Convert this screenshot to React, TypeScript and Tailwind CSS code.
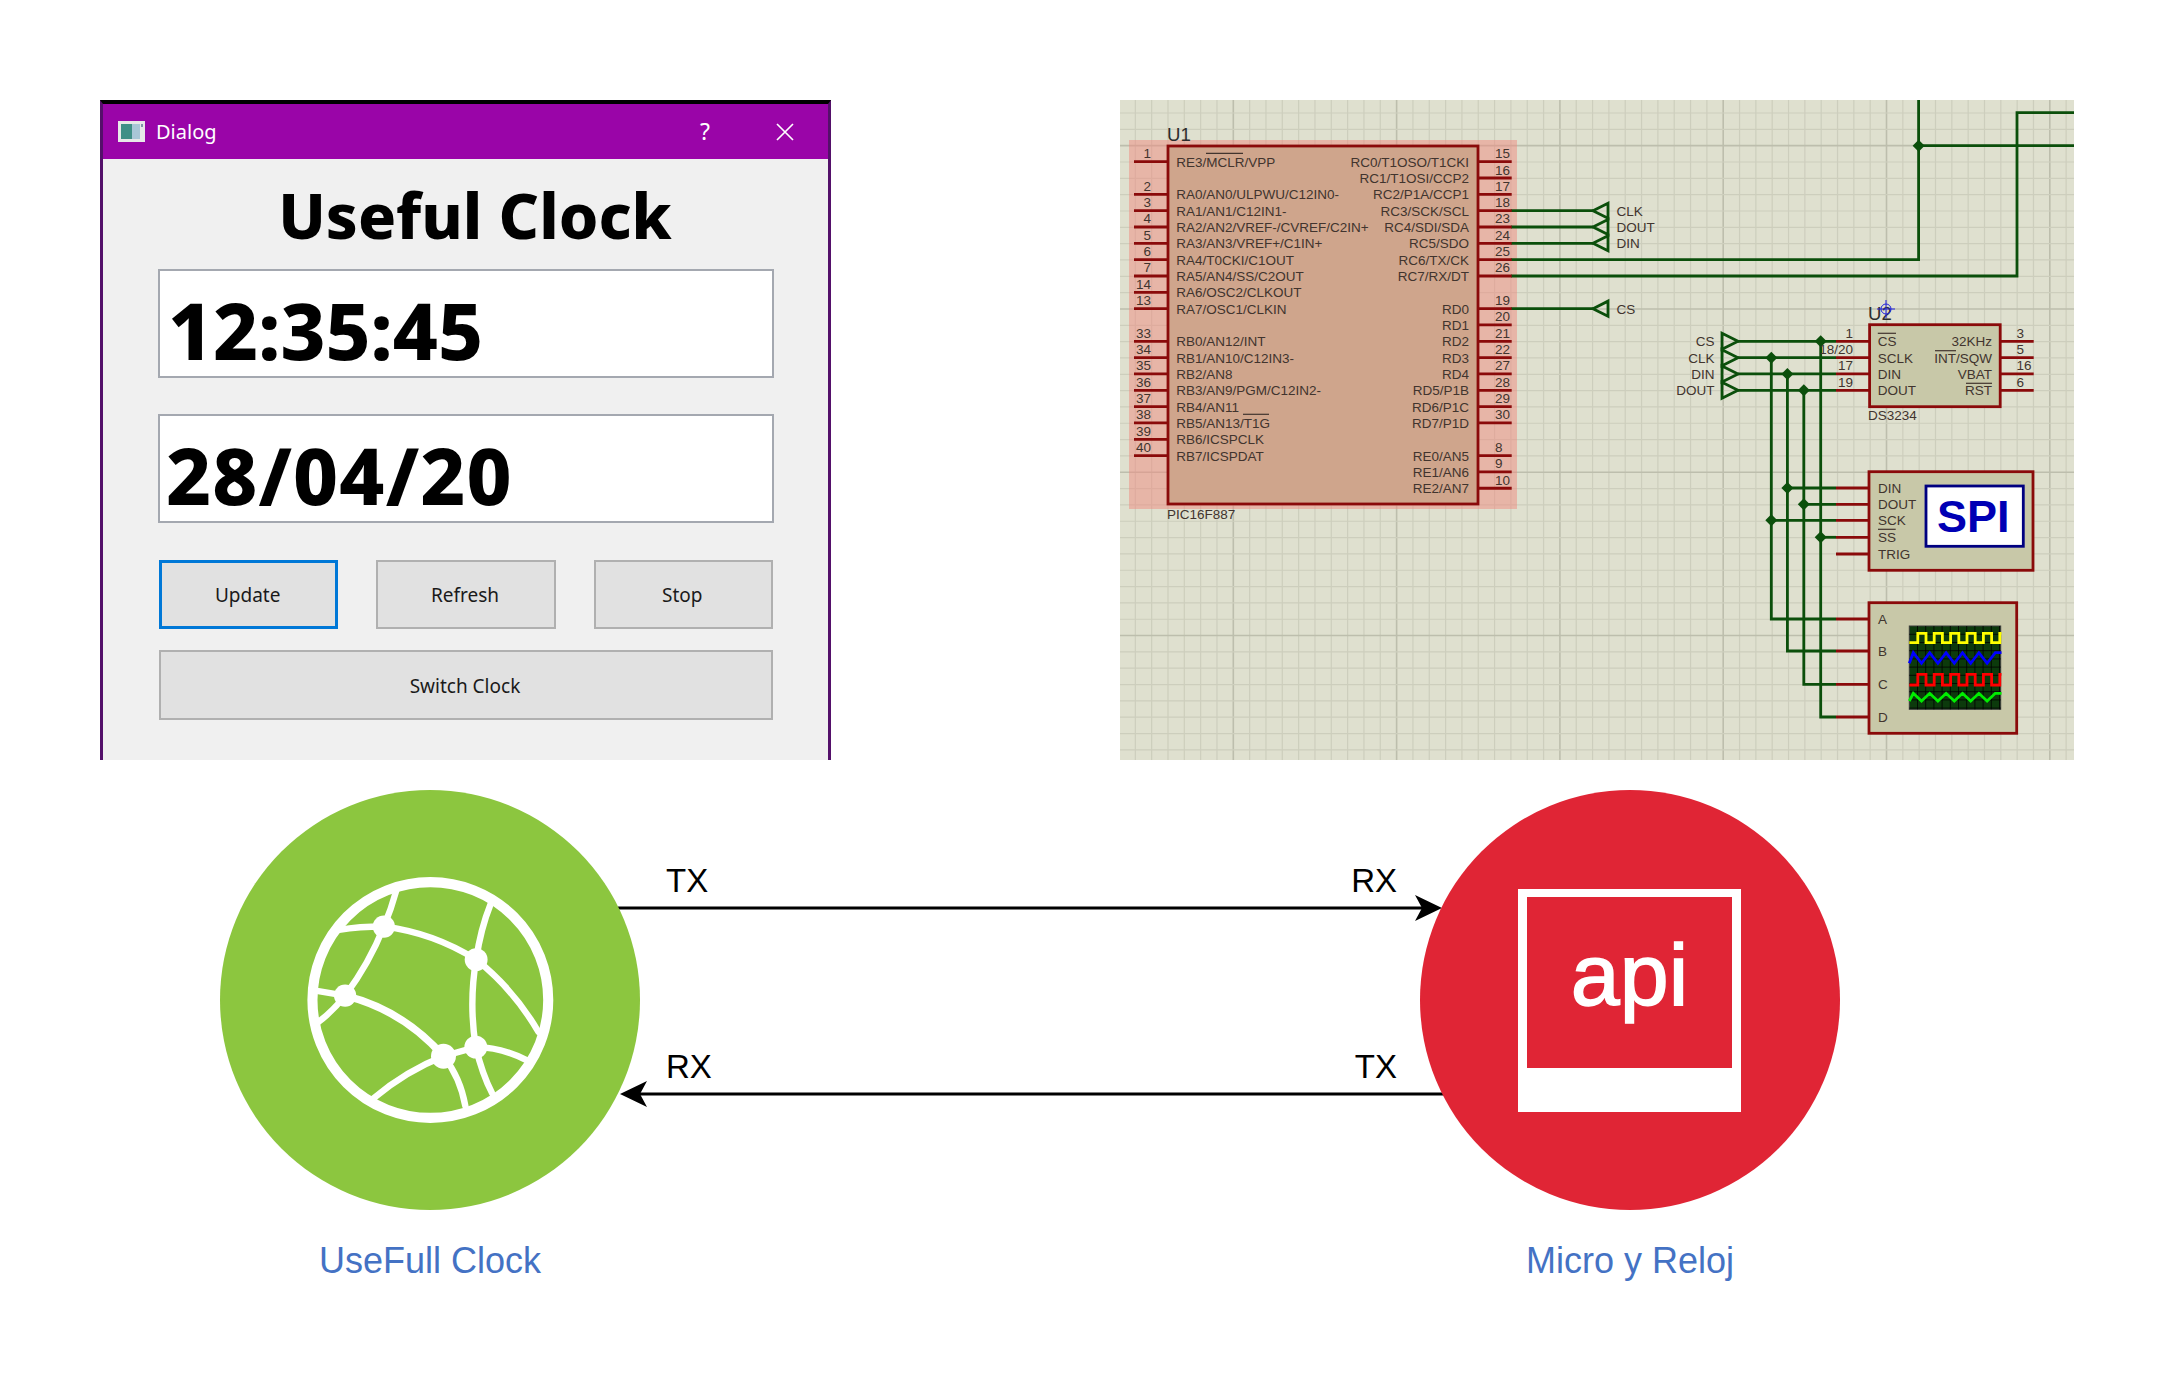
import { ReactNode } from "react";

// Schematic rows sit on a 16.33px pitch, everything below is in page pixels.
const rowY = (r: number) => 161.67 + 16.33 * r;
const WIRE = "#0b4f0b";
const PIN = "#8a0a0a";
const INK = "#41342e";

const leftPins: [number, string, string][] = [
  [0, "1", "RE3/MCLR/VPP"],
  [2, "2", "RA0/AN0/ULPWU/C12IN0-"],
  [3, "3", "RA1/AN1/C12IN1-"],
  [4, "4", "RA2/AN2/VREF-/CVREF/C2IN+"],
  [5, "5", "RA3/AN3/VREF+/C1IN+"],
  [6, "6", "RA4/T0CKI/C1OUT"],
  [7, "7", "RA5/AN4/SS/C2OUT"],
  [8, "14", "RA6/OSC2/CLKOUT"],
  [9, "13", "RA7/OSC1/CLKIN"],
  [11, "33", "RB0/AN12/INT"],
  [12, "34", "RB1/AN10/C12IN3-"],
  [13, "35", "RB2/AN8"],
  [14, "36", "RB3/AN9/PGM/C12IN2-"],
  [15, "37", "RB4/AN11"],
  [16, "38", "RB5/AN13/T1G"],
  [17, "39", "RB6/ICSPCLK"],
  [18, "40", "RB7/ICSPDAT"],
];

const rightPins: [number, string, string][] = [
  [0, "15", "RC0/T1OSO/T1CKI"],
  [1, "16", "RC1/T1OSI/CCP2"],
  [2, "17", "RC2/P1A/CCP1"],
  [3, "18", "RC3/SCK/SCL"],
  [4, "23", "RC4/SDI/SDA"],
  [5, "24", "RC5/SDO"],
  [6, "25", "RC6/TX/CK"],
  [7, "26", "RC7/RX/DT"],
  [9, "19", "RD0"],
  [10, "20", "RD1"],
  [11, "21", "RD2"],
  [12, "22", "RD3"],
  [13, "27", "RD4"],
  [14, "28", "RD5/P1B"],
  [15, "29", "RD6/P1C"],
  [16, "30", "RD7/P1D"],
  [18, "8", "RE0/AN5"],
  [19, "9", "RE1/AN6"],
  [20, "10", "RE2/AN7"],
];

function range(from: number, to: number, step: number) {
  const out: number[] = [];
  for (let v = from; v <= to; v += step) out.push(v);
  return out;
}

function squareWave(x0: number, x1: number, low: number, high: number) {
  const pts: string[] = [`${x0},${low}`];
  let x = x0 + 8.5;
  let up = true;
  while (x < x1) {
    pts.push(`${x},${up ? low : high}`, `${x},${up ? high : low}`);
    x += 8.2;
    up = !up;
  }
  pts.push(`${x1},${up ? low : high}`);
  return pts.join(" ");
}

function zigzag(x0: number, x1: number, low: number, high: number) {
  const pts: string[] = [`${x0},${low}`];
  let x = x0 + 4;
  let up = true;
  while (x < x1) {
    pts.push(`${x},${up ? high : low}`);
    x += 8.2;
    up = !up;
  }
  pts.push(`${x1},${up ? low : high}`);
  return pts.join(" ");
}

function Label({ x, y, children, end, size = 13.5 }: { x: number; y: number; children: ReactNode; end?: boolean; size?: number }) {
  return (
    <text x={x} y={y} fontSize={size} fill={INK} textAnchor={end ? "end" : "start"}>
      {children}
    </text>
  );
}

function Dot({ x, y }: { x: number; y: number }) {
  return <path d={`M${x - 6} ${y}L${x} ${y - 6}L${x + 6} ${y}L${x} ${y + 6}Z`} fill={WIRE} />;
}

function Schematic() {
  const vBus = [1771.3, 1787.4, 1803.8, 1820.7];
  const spiRows = [488, 504.3, 520.3, 537.3, 554];
  const scopeRows = [619, 651, 684.3, 717];

  return (
    <svg viewBox="1120 100 954 660" className="block h-[660px] w-[954px] shrink-0 font-['Liberation_Sans',sans-serif]">
      <rect x="1120" y="100" width="954" height="660" fill="#dfe0cf" />
      {range(1119, 2074, 16.33).map((x, i) => (
        <line key={i} x1={x} x2={x} y1="100" y2="760" stroke={i % 10 === 7 ? "#bdbead" : "#cdcebd"} strokeWidth={i % 10 === 7 ? 1.6 : 1.2} />
      ))}
      {range(113.0, 760, 16.33).map((y, i) => (
        <line key={i} x1="1120" x2="2074" y1={y} y2={y} stroke={i % 10 === 2 ? "#bdbead" : "#cdcebd"} strokeWidth={i % 10 === 2 ? 1.6 : 1.2} />
      ))}

      {/* U1 */}
      <rect x="1129" y="140" width="388" height="369" fill="#ef8a80" opacity="0.5" />
      <rect x="1168" y="146" width="310" height="358" fill="#cfa58c" stroke={PIN} strokeWidth="2.8" />
      <text x="1167" y="141" fontSize="18.6" fill="#2c2c2c">U1</text>
      <text x="1167" y="519" fontSize="13.5" fill={INK}>PIC16F887</text>

      {/* MCU nets */}
      <g fill="none" stroke={WIRE} strokeWidth="2.8">
        <path d={`M1511 ${rowY(3)}H1593`} />
        <path d={`M1511 ${rowY(4)}H1593`} />
        <path d={`M1511 ${rowY(5)}H1593`} />
        <path d={`M1511 ${rowY(9)}H1593`} />
        <path d={`M1511 ${rowY(6)}H1918.6V100`} />
        <path d={`M1511 ${rowY(7)}H2017V112.7H2074`} />
        <path d="M1918.6 145.7H2074" />
        {[3, 4, 5, 9].map((r) => (
          <path key={r} d={`M1593 ${rowY(r)}L1608 ${rowY(r) - 7.5}V${rowY(r) + 7.5}Z`} />
        ))}
      </g>
      <Dot x={1918.6} y={145.7} />
      <Label x={1616.5} y={rowY(3) + 5}>CLK</Label>
      <Label x={1616.5} y={rowY(4) + 5}>DOUT</Label>
      <Label x={1616.5} y={rowY(5) + 5}>DIN</Label>
      <Label x={1616.5} y={rowY(9) + 5}>CS</Label>

      {leftPins.map(([r, num, name]) => (
        <g key={num}>
          <line x1="1134" x2="1168" y1={rowY(r)} y2={rowY(r)} stroke={PIN} strokeWidth="2.8" />
          <Label x={1151} y={rowY(r) - 3.5} end>{num}</Label>
          <Label x={1176.2} y={rowY(r) + 5}>{name}</Label>
        </g>
      ))}
      {rightPins.map(([r, num, name]) => (
        <g key={num}>
          <line x1="1478" x2="1511.7" y1={rowY(r)} y2={rowY(r)} stroke={PIN} strokeWidth="2.8" />
          <Label x={1495} y={rowY(r) - 3.5}>{num}</Label>
          <Label x={1469} y={rowY(r) + 5} end>{name}</Label>
        </g>
      ))}
      <line x1="1206" x2="1243" y1="153.3" y2="153.3" stroke={INK} strokeWidth="1.2" />
      <line x1="1243" x2="1269" y1="414.3" y2="414.3" stroke={INK} strokeWidth="1.2" />

      {/* U2 */}
      <g fill="none" stroke={WIRE} strokeWidth="2.8">
        {[11, 12, 13, 14].map((r) => (
          <g key={r}>
            <path d={`M1738 ${rowY(r)}H1836`} />
            <path d={`M1722 ${rowY(r) - 8}L1738 ${rowY(r)}L1722 ${rowY(r) + 8}Z`} />
          </g>
        ))}
        <path d={`M${vBus[0]} ${rowY(12)}V${scopeRows[0]}H1836`} />
        <path d={`M${vBus[1]} ${rowY(13)}V${scopeRows[1]}H1836`} />
        <path d={`M${vBus[2]} ${rowY(14)}V${scopeRows[2]}H1836`} />
        <path d={`M${vBus[3]} ${rowY(11)}V${scopeRows[3]}H1836`} />
        <path d={`M${vBus[1]} ${spiRows[0]}H1836`} />
        <path d={`M${vBus[2]} ${spiRows[1]}H1836`} />
        <path d={`M${vBus[0]} ${spiRows[2]}H1836`} />
        <path d={`M${vBus[3]} ${spiRows[3]}H1836`} />
      </g>
      <Dot x={vBus[3]} y={rowY(11)} />
      <Dot x={vBus[0]} y={rowY(12)} />
      <Dot x={vBus[1]} y={rowY(13)} />
      <Dot x={vBus[2]} y={rowY(14)} />
      <Dot x={vBus[1]} y={spiRows[0]} />
      <Dot x={vBus[2]} y={spiRows[1]} />
      <Dot x={vBus[0]} y={spiRows[2]} />
      <Dot x={vBus[3]} y={spiRows[3]} />

      <Label x={1714.5} y={rowY(11) + 5} end>CS</Label>
      <Label x={1714.5} y={rowY(12) + 5} end>CLK</Label>
      <Label x={1714.5} y={rowY(13) + 5} end>DIN</Label>
      <Label x={1714.5} y={rowY(14) + 5} end>DOUT</Label>

      <rect x="1869.6" y="324.7" width="130.6" height="82" fill="#c8c8a8" stroke={PIN} strokeWidth="2.8" />
      <text x="1868" y="320" fontSize="18.6" fill="#2c2c2c">U2</text>
      <g fill="none" stroke="#2222dd" strokeWidth="1">
        <circle cx="1886" cy="309" r="5" />
        <path d="M1886 300V318M1877 309H1895" />
      </g>
      <Label x={1868} y={419.5}>DS3234</Label>
      {[
        [11, "1", "CS", "3", "32KHz"],
        [12, "18/20", "SCLK", "5", "INT/SQW"],
        [13, "17", "DIN", "16", "VBAT"],
        [14, "19", "DOUT", "6", "RST"],
      ].map(([r, ln, ls, rn, rs]) => {
        const y = rowY(Number(r));
        return (
          <g key={ls}>
            <line x1="1836" x2="1869.6" y1={y} y2={y} stroke={PIN} strokeWidth="2.8" />
            <line x1="2000.2" x2="2033.7" y1={y} y2={y} stroke={PIN} strokeWidth="2.8" />
            <Label x={1853} y={y - 3.5} end>{ln}</Label>
            <Label x={2016.5} y={y - 3.5}>{rn}</Label>
            <Label x={1877.8} y={y + 5}>{ls}</Label>
            <Label x={1992} y={y + 5} end>{rs}</Label>
          </g>
        );
      })}
      <g stroke={INK} strokeWidth="1.2">
        <line x1="1877.8" x2="1896" y1="333.3" y2="333.3" />
        <line x1="1935" x2="1956" y1="350.7" y2="350.7" />
        <line x1="1966" x2="1992" y1="383.3" y2="383.3" />
      </g>

      {/* SPI debugger */}
      <rect x="1869" y="471.7" width="164" height="98.6" fill="#c8c8a8" stroke={PIN} strokeWidth="2.8" />
      {["DIN", "DOUT", "SCK", "SS", "TRIG"].map((name, i) => (
        <g key={name}>
          <line x1="1836" x2="1869" y1={spiRows[i]} y2={spiRows[i]} stroke={PIN} strokeWidth="2.8" />
          <Label x={1878} y={spiRows[i] + 5}>{name}</Label>
        </g>
      ))}
      <line x1="1878" x2="1895.7" y1="529.3" y2="529.3" stroke={INK} strokeWidth="1.2" />
      <rect x="1926" y="486" width="97.3" height="60.3" fill="#ffffff" stroke="#000080" strokeWidth="2.8" />
      <text x="1937" y="532.3" fontSize="45" fontWeight="700" fill="#0000b4">SPI</text>

      {/* Oscilloscope */}
      <rect x="1869" y="602.7" width="147.7" height="130.6" fill="#c8c8a8" stroke={PIN} strokeWidth="2.8" />
      {["A", "B", "C", "D"].map((name, i) => (
        <g key={name}>
          <line x1="1836" x2="1869" y1={scopeRows[i]} y2={scopeRows[i]} stroke={PIN} strokeWidth="2.8" />
          <Label x={1878} y={scopeRows[i] + 5}>{name}</Label>
        </g>
      ))}
      <rect x="1909.3" y="626" width="91.4" height="83.3" fill="#0c3a0c" stroke="#3a3a3a" strokeWidth="1" />
      {range(1917.5, 2000, 8.2).map((x) => (
        <line key={x} x1={x} x2={x} y1="626" y2="709.3" stroke="#000000" strokeWidth="0.8" />
      ))}
      {range(634.3, 709, 8.2).map((y) => (
        <line key={y} x1="1909.3" x2="2000.7" y1={y} y2={y} stroke="#000000" strokeWidth="0.8" />
      ))}
      <g fill="none" strokeWidth="2.8">
        <polyline points={squareWave(1909.3, 2001.5, 642.7, 633.3)} stroke="#ffff00" />
        <polyline points={zigzag(1909.3, 2001.5, 663.3, 652.7)} stroke="#0000ff" />
        <polyline points={squareWave(1909.3, 2001.5, 685, 674.3)} stroke="#ff0000" />
        <polyline points={zigzag(1909.3, 2001.5, 701, 693.3)} stroke="#00ee00" />
      </g>
    </svg>
  );
}

function DialogButton({ children, focused }: { children: ReactNode; focused?: boolean }) {
  return (
    <div
      className={`flex h-[69px] items-center justify-center bg-[#e1e1e1] pr-[2px] pt-[2px] text-[19px] text-[#1a1a1a] ${
        focused ? "border-[3px] border-[#0078d7]" : "border-2 border-[#b0b0b0]"
      }`}
    >
      {children}
    </div>
  );
}

function ClockDialog() {
  return (
    <div className="flex h-[660px] w-[731px] shrink-0 flex-col overflow-hidden border-x-[3px] border-t-[4px] border-x-[#54106a] border-t-black bg-[#f0f0f0] font-['Noto_Sans',sans-serif]">
      <div className="flex h-[55px] shrink-0 items-center bg-[#9a05a8] pl-[15px] text-white">
        <svg viewBox="0 0 27 21" className="h-[21px] w-[27px]">
          <rect width="27" height="21" fill="#e8e8e8" />
          <rect x="3" y="3" width="11" height="15" fill="#3f8f86" />
          <rect x="14" y="3" width="8" height="15" fill="#a9c6d6" />
          <rect x="23" y="3" width="2" height="3" fill="#7f97a8" />
        </svg>
        <span className="ml-[11px] text-[20px] leading-none">Dialog</span>
        <span className="ml-auto text-[23px] leading-none">?</span>
        <svg viewBox="0 0 18 18" className="ml-[66px] mr-[34px] h-[18px] w-[18px]" fill="none" stroke="#ffffff" strokeWidth="1.7">
          <path d="M1 1L17 17M17 1L1 17" />
        </svg>
      </div>
      <div className="flex flex-1 flex-col pl-[55px] pr-[54px]">
        <h1 className="flex h-[110px] shrink-0 items-center justify-center pl-[18px] pt-[3px] text-[63px] font-extrabold text-black">Useful Clock</h1>
        <div className="flex h-[109px] items-center border-2 border-[#a4a8b0] bg-white pl-[8px] pt-[13px] text-[78px] font-extrabold leading-none text-black">12:35:45</div>
        <div className="mt-[36px] flex h-[109px] items-center border-2 border-[#a4a8b0] bg-white pl-[6px] pt-[13px] text-[78px] font-extrabold leading-none tracking-[1.2px] text-black">28/04/20</div>
        <div className="ml-[1px] mr-[1px] mt-[37px] grid grid-cols-3 gap-[38px]">
          <DialogButton focused>Update</DialogButton>
          <DialogButton>Refresh</DialogButton>
          <DialogButton>Stop</DialogButton>
        </div>
        <div className="ml-[1px] mr-[1px] mt-[21px]">
          <div className="flex h-[70px] items-center justify-center border-2 border-[#b0b0b0] bg-[#e1e1e1] pr-[2px] pt-[2px] text-[19px] text-[#1a1a1a]">Switch Clock</div>
        </div>
      </div>
    </div>
  );
}

function GlobeIcon() {
  return (
    <svg viewBox="310 280 760 760" className="h-[256px] w-[256px]" fill="none" stroke="#ffffff" strokeLinecap="round">
      <circle cx="691" cy="660" r="350" strokeWidth="30" />
      <g strokeWidth="19">
        <path d="M553 442Q575 390 590 335" />
        <path d="M553 442Q480 442 420 452" />
        <path d="M553 442Q700 460 827 540" />
        <path d="M553 442Q510 550 438 647" />
        <path d="M827 540Q840 450 870 375" />
        <path d="M827 540Q805 670 826 800" />
        <path d="M827 540Q940 630 1012 755" />
        <path d="M438 647L350 632" />
        <path d="M438 647Q400 695 355 728" />
        <path strokeWidth="22" d="M438 647Q610 690 730 827" />
        <path d="M730 827L826 800" />
        <path d="M730 827Q620 870 522 952" />
        <path d="M730 827Q780 890 795 975" />
        <path d="M826 800Q900 800 975 838" />
        <path d="M826 800Q845 880 875 938" />
      </g>
      <g fill="#ffffff" stroke="none">
        <circle cx="553" cy="442" r="33" />
        <circle cx="827" cy="540" r="34" />
        <circle cx="438" cy="647" r="33" />
        <circle cx="730" cy="827" r="37" />
        <circle cx="826" cy="800" r="34" />
      </g>
    </svg>
  );
}

function Node({ color, caption, children }: { color: string; caption: string; children: ReactNode }) {
  return (
    <div className="relative z-10 flex w-[420px] shrink-0 flex-col items-center">
      <div className={`flex h-[420px] w-[420px] items-center justify-center rounded-full ${color}`}>{children}</div>
      <div className="mt-[30px] text-[36px] leading-[42px] text-[#4472c4]">{caption}</div>
    </div>
  );
}

function Link({ left, right, reverse }: { left: string; right: string; reverse?: boolean }) {
  return (
    <div>
      <div className="flex h-[28px] items-center justify-between pl-[48px] pr-[47px] text-[33px] leading-none text-black">
        <span>{left}</span>
        <span>{right}</span>
      </div>
      <svg viewBox="0 0 826 28" className="block h-[28px] w-[826px]">
        {reverse ? (
          <>
            <line x1="20" x2="826" y1="14" y2="14" stroke="#000000" strokeWidth="2.8" />
            <path d="M2 14L29 1L22 14L29 27Z" fill="#000000" />
          </>
        ) : (
          <>
            <line x1="0" x2="806" y1="14" y2="14" stroke="#000000" strokeWidth="2.8" />
            <path d="M824 14L797 1L804 14L797 27Z" fill="#000000" />
          </>
        )}
      </svg>
    </div>
  );
}

export default function App() {
  return (
    <div className="h-[1385px] w-[2177px] overflow-hidden bg-white font-['Liberation_Sans',sans-serif]">
      <div className="flex pl-[100px] pt-[100px]">
        <ClockDialog />
        <div className="ml-[289px]">
          <Schematic />
        </div>
      </div>
      <div className="mt-[30px] flex pl-[220px]">
        <Node color="bg-[#8cc63f]" caption="UseFull Clock">
          <GlobeIcon />
        </Node>
        <div className="-ml-[22px] -mr-[24px] flex w-[826px] shrink-0 flex-col pt-[76px]">
          <Link left="TX" right="RX" />
          <div className="h-[130px]" />
          <Link left="RX" right="TX" reverse />
        </div>
        <Node color="bg-[#e02535]" caption="Micro y Reloj">
          <div className="mr-[1px] h-[223px] w-[223px] bg-white px-[9px] pb-[44px] pt-[8px]">
            <div className="flex h-full items-center justify-center bg-[#e02535] pb-[14px] text-[88px] leading-none text-white [-webkit-text-stroke:1.5px_white]">api</div>
          </div>
        </Node>
      </div>
    </div>
  );
}
